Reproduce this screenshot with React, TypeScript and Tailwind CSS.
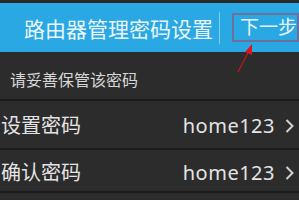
import React from "react";

function Chevron() {
    return (
        <svg width="9" height="16" viewBox="0 0 9 16" className="ml-[10px] shrink-0">
            <path d="M1.5 2 L7.5 8 L1.5 14" stroke="#d0d0d0" strokeWidth="2" fill="none" />
        </svg>
    );
}

function Row({ label, value, className }: { label: string; value: string; className: string }) {
    return (
        <div className={`flex items-center bg-[#2c2c2c] pl-[1px] pr-[5px] border-b-2 border-[#1b1b1b] ${className}`}>
            <span className="flex-1 text-[20px] text-[#e4e4e4]">{label}</span>
            <span className="text-[20px] text-[#e4e4e4] tracking-[0.5px]">{value}</span>
            <Chevron />
        </div>
    );
}

export default function App() {
    return (
        <div
            className="w-[299px] h-[200px] overflow-hidden bg-[#2c2c2c] relative"
            style={{ fontFamily: '"Noto Sans", "Noto Sans CJK SC", sans-serif' }}
        >
            {/* Top bar */}
            <div className="border-t-[3px] border-[#2a2a2a] bg-[#2aa8e3] h-[52px] flex items-center">
                <div className="w-[219px] text-right pr-[6px] pt-[3px] text-[21px] text-[#eaf6fc] leading-none">
                    路由器管理密码设置
                </div>
                <div className="w-[1px] h-[32px] bg-[#7fcdf0]" />
                <div className="ml-[12px] flex-1 h-[29px] border-2 border-[#6e6f9c] flex items-center pl-[6px] text-[19px] text-[#eaf6fc] leading-none">
                    下一步
                </div>
            </div>

            {/* Section header */}
            <div className="h-[49px] flex items-center pt-[8px] pl-[10px] text-[16px] text-[#d8d8d8] border-b-2 border-[#1b1b1b]">
                请妥善保管该密码
            </div>

            <Row label="设置密码" value="home123" className="h-[49px] pt-[3px]" />
            <Row label="确认密码" value="home123" className="h-[43px] pt-[5px]" />

            {/* Red annotation arrow */}
            <svg className="absolute left-[232px] top-[42px]" width="26" height="34" viewBox="0 0 26 34">
                <line x1="6" y1="30" x2="17" y2="9" stroke="#c8161d" strokeWidth="1.2" />
                <polygon points="20,2 13,10 20,13" fill="#e0141c" />
            </svg>
        </div>
    );
}
